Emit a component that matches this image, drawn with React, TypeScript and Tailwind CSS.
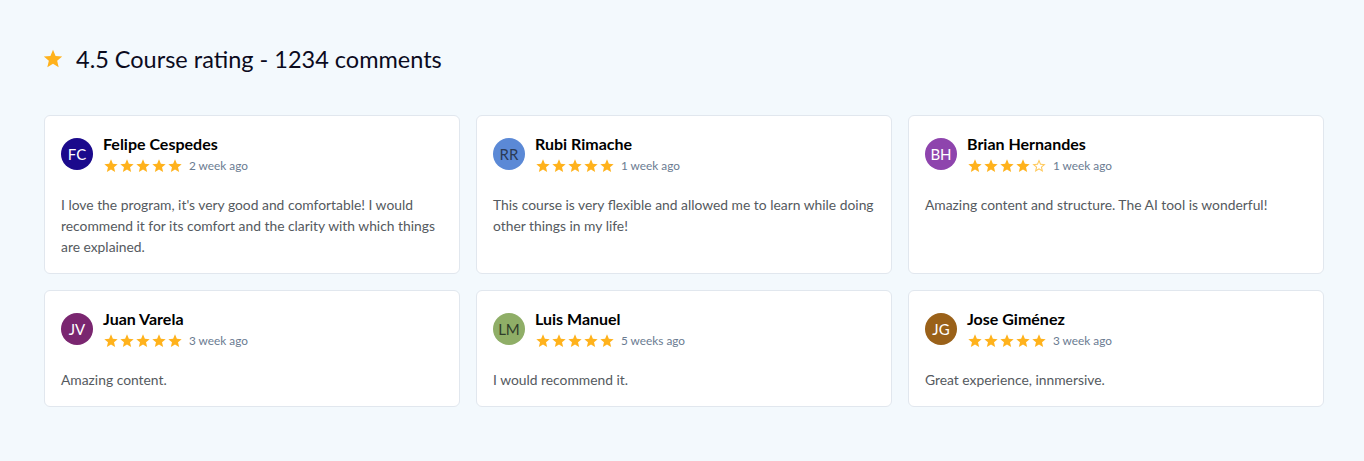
import React from "react";

type Review = {
  initials: string;
  name: string;
  rating: number;
  time: string;
  text: string;
  bg: string;
  fg: string;
};

const reviews: Review[] = [
  { initials: "FC", name: "Felipe Cespedes", rating: 5, time: "2 week ago", text: "I love the program, it's very good and comfortable! I would recommend it for its comfort and the clarity with which things are explained.", bg: "bg-[#1b0a8c]", fg: "text-white" },
  { initials: "RR", name: "Rubi Rimache", rating: 5, time: "1 week ago", text: "This course is very flexible and allowed me to learn while doing other things in my life!", bg: "bg-[#5b89d6]", fg: "text-[#2b3a55]" },
  { initials: "BH", name: "Brian Hernandes", rating: 4, time: "1 week ago", text: "Amazing content and structure. The AI tool is wonderful!", bg: "bg-[#8e44ad]", fg: "text-white" },
  { initials: "JV", name: "Juan Varela", rating: 5, time: "3 week ago", text: "Amazing content.", bg: "bg-[#7a2670]", fg: "text-white" },
  { initials: "LM", name: "Luis Manuel", rating: 5, time: "5 weeks ago", text: "I would recommend it.", bg: "bg-[#8fae67]", fg: "text-[#2f3d2a]" },
  { initials: "JG", name: "Jose Giménez", rating: 5, time: "3 week ago", text: "Great experience, innmersive.", bg: "bg-[#9a6119]", fg: "text-white" },
];

const STAR = "M12 17.27L18.18 21l-1.64-7.03L22 9.24l-7.19-.61L12 2 9.19 8.63 2 9.24l5.46 4.73L5.82 21z";
const STAR_BORDER = "M22 9.24l-7.19-.62L12 2 9.19 8.63 2 9.24l5.46 4.73L5.82 21 12 17.27 18.18 21l-1.63-7.03L22 9.24zM12 15.4l-3.76 2.27 1-4.28-3.32-2.88 4.38-.38L12 6.1l1.71 4.04 4.38.38-3.32 2.88 1 4.28L12 15.4z";

function Star({ filled, size }: { filled: boolean; size: number }) {
  return (
    <svg width={size} height={size} viewBox="0 0 24 24" fill={filled ? "#ffb21c" : "#ffc95c"}>
      <path d={filled ? STAR : STAR_BORDER} />
    </svg>
  );
}

function Card({ r }: { r: Review }) {
  return (
    <div className="bg-white border border-[#e1e7ee] rounded-[6px] pl-4 pr-3 pt-[18px] pb-4">
      <div className="flex items-center gap-[10px]">
        <div className={`w-8 h-8 rounded-full flex items-center justify-center text-[15px] ${r.bg} ${r.fg}`}>
          {r.initials}
        </div>
        <div className="flex flex-col">
          <div className="text-[16px] leading-[20px] font-bold text-black">{r.name}</div>
          <div className="mt-1 flex items-center h-[16px]">
            <div className="flex">
              {[0, 1, 2, 3, 4].map((i) => (
                <Star key={i} filled={i < r.rating} size={16} />
              ))}
            </div>
            <span className="ml-[6px] text-[11.8px] text-[#6a7b91]">{r.time}</span>
          </div>
        </div>
      </div>
      <p className="mt-5 text-[13.85px] leading-[21px] text-[#555a60]">{r.text}</p>
    </div>
  );
}

export default function App() {
  return (
    <div className="min-h-[461px] bg-[#f3f9fd] pl-[44px] pt-[43px] pb-10" style={{ fontFamily: "Lato, 'Noto Sans', sans-serif" }}>
      <div className="flex items-center h-8 gap-3">
        <div className="-ml-[2px]">
          <Star filled size={22} />
        </div>
        <h1 className="text-[23.5px] leading-8 text-[#0b0b1e]">4.5 Course rating - 1234 comments</h1>
      </div>
      <div className="mt-[40px] w-[1280px] grid grid-cols-3 gap-4">
        {reviews.map((r) => (
          <Card key={r.name} r={r} />
        ))}
      </div>
    </div>
  );
}
